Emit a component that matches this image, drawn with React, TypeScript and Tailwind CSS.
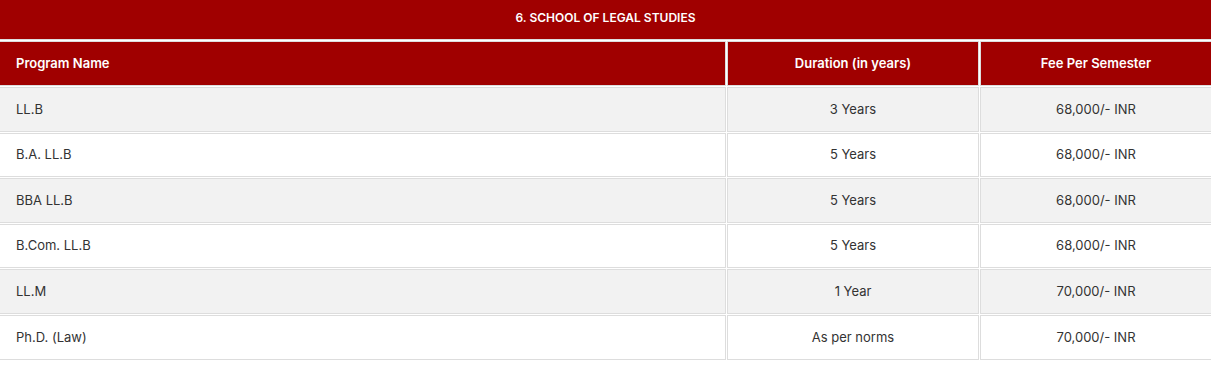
import React from "react";

const rows = [
  { name: "LL.B", duration: "3 Years", fee: "68,000/- INR" },
  { name: "B.A. LL.B", duration: "5 Years", fee: "68,000/- INR" },
  { name: "BBA LL.B", duration: "5 Years", fee: "68,000/- INR" },
  { name: "B.Com. LL.B", duration: "5 Years", fee: "68,000/- INR" },
  { name: "LL.M", duration: "1 Year", fee: "70,000/- INR" },
  { name: "Ph.D. (Law)", duration: "As per norms", fee: "70,000/- INR" },
];

const cols = "grid grid-cols-[726px_252px_1fr] gap-x-px";

const App = () => {
  return (
    <div className="w-[1211px] bg-white font-['Inter','Noto_Sans',sans-serif] text-[13px]">
      <div className="flex h-[40px] items-center justify-center border-b border-[#dddddd] bg-[#a00000] pb-[4px] text-[12px] font-semibold text-white">
        6. SCHOOL OF LEGAL STUDIES
      </div>

      <div className="mt-px flex flex-col gap-y-px">
        <div className={`${cols} h-[45px] font-semibold text-white`}>
          <div className="flex items-center border border-l-0 border-[#dddddd] bg-[#a00000] pl-4">
            Program Name
          </div>
          <div className="flex items-center justify-center border border-[#dddddd] bg-[#a00000]">
            Duration (in years)
          </div>
          <div className="flex items-center justify-center border border-r-0 border-[#dddddd] bg-[#a00000]">
            Fee Per Semester
          </div>
        </div>

        {rows.map((r, i) => {
          const bg = i % 2 === 0 ? "bg-[#f2f2f2]" : "bg-white";
          return (
            <div key={r.name} className={`${cols} h-[44.6px] text-[#333333]`}>
              <div className={`flex items-center border border-l-0 border-[#dddddd] pl-4 ${bg}`}>
                {r.name}
              </div>
              <div className={`flex items-center justify-center border border-[#dddddd] ${bg}`}>
                {r.duration}
              </div>
              <div className={`flex items-center justify-center border border-r-0 border-[#dddddd] ${bg}`}>
                {r.fee}
              </div>
            </div>
          );
        })}
      </div>
    </div>
  );
};

export default App;
